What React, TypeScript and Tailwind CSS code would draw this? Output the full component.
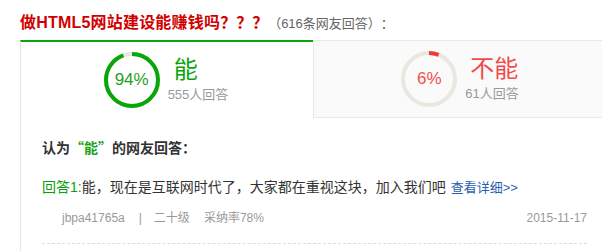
import React from "react";

function Ring({ pct, color, track }: { pct: number; color: string; track: string }) {
  const r = 26;
  const c = 2 * Math.PI * r;
  return (
    <svg width="58" height="58" viewBox="0 0 58 58" className="block">
      <circle cx="29" cy="29" r={r} fill="none" stroke={track} strokeWidth="4" />
      <circle
        cx="29"
        cy="29"
        r={r}
        fill="none"
        stroke={color}
        strokeWidth="4"
        strokeDasharray={`${(c * pct) / 100} ${c}`}
        transform="rotate(-90 29 29)"
      />
    </svg>
  );
}

const cjk = "font-['Noto_Sans_CJK_SC',sans-serif]";
const punct = "inline-block w-[1em] text-center font-['Noto_Sans_CJK_SC',sans-serif]";

export default function App() {
  return (
    <div className="w-[602px] h-[251px] bg-white overflow-hidden font-['Liberation_Sans',Arial,'Noto_Sans_CJK_SC',sans-serif]">
      <div className="pl-5 pt-[9px] h-[40px] leading-[24px]">
        <span className="text-[16px] font-bold text-[#d10000] tracking-[0.2px]">
          做HTML5网站建设能赚钱吗<span className={punct}>？</span><span className={punct}>？</span><span className={punct}>？</span>
        </span>
        <span className="text-[13px] text-[#666]">
          <span className={punct}>（</span>616条网友回答<span className={punct}>）</span><span className={punct}>：</span>
        </span>
      </div>
      <div className="ml-5 flex h-[78px]">
        <div className="w-[293px] border-t-2 border-t-[#07a707] border-l border-l-[#e6e6e6] bg-white flex items-center justify-center gap-[7px] pr-[3px]">
          <div className="relative w-[58px] h-[58px]">
            <Ring pct={94} color="#07a707" track="#e6e8e0" />
            <div className="absolute inset-0 flex items-center justify-center text-[17px] text-[#1f9f1f]">94%</div>
          </div>
          <div className="flex flex-col">
            <div className="pl-[6px] text-[24px] leading-[28px] text-[#0aa30a]">能</div>
            <div className="text-[13px] leading-[18px] mt-[2px] text-[#999]">555人回答</div>
          </div>
        </div>
        <div className="flex-1 bg-[#fafafa] border border-[#e8e8e8] border-r-0 flex items-center justify-center gap-[7px] pl-[3px]">
          <div className="relative w-[58px] h-[58px]">
            <Ring pct={6} color="#f0393f" track="#e8e8e0" />
            <div className="absolute inset-0 flex items-center justify-center text-[17px] text-[#f25050]">6%</div>
          </div>
          <div className="flex flex-col">
            <div className="pl-[5px] text-[24px] leading-[28px] text-[#f24a4a]">不能</div>
            <div className="text-[13px] leading-[18px] mt-[2px] text-[#999]">61人回答</div>
          </div>
        </div>
      </div>
      <div className="ml-5 border-l border-l-[#e6e6e6] pl-[21px] pr-[15px] h-[133px]">
        <div className="pt-[19px] text-[14px] leading-[20px] font-bold text-[#333]">
          认为<span className={`text-[#1aa31a] ${cjk}`}>“能”</span>的网友回答<span className={punct}>：</span>
        </div>
        <div className="mt-[19px] text-[14px] leading-[20px] text-[#333] whitespace-nowrap">
          <span className="text-[#0a9f0a]">回答1:</span>能，现在是互联网时代了，大家都在重视这块，加入我们吧
          <span className="ml-[5px] text-[13px] text-[#2a5fb0]">查看详细&gt;&gt;</span>
        </div>
        <div className="mt-[10px] flex text-[12px] leading-[20px] text-[#999] border-b border-dashed border-b-[#dcdcdc] pb-[15px]">
          <span className="ml-5">jbpa41765a</span>
          <span className="ml-[14px]">|</span>
          <span className="ml-[12px]">二十级</span>
          <span className="ml-[14px]">采纳率78%</span>
          <span className="ml-auto">2015-11-17</span>
        </div>
      </div>
    </div>
  );
}
